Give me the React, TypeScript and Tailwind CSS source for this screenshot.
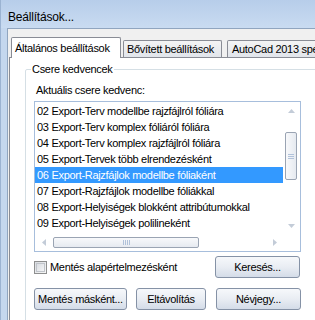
const items = [
  "02 Export-Terv modellbe rajzfájlról fóliára",
  "03 Export-Terv komplex fóliáról fóliára",
  "04 Export-Terv komplex rajzfájlról fóliára",
  "05 Export-Tervek több elrendezésként",
  "06 Export-Rajzfájlok modellbe fóliaként",
  "07 Export-Rajzfájlok modellbe fóliákkal",
  "08 Export-Helyiségek blokként attribútumokkal",
  "09 Export-Helyiségek polilineként",
];

const selected = 4;

function Arrow({ dir }: { dir: "up" | "down" | "left" | "right" }) {
  const pts: Record<string, string> = {
    up: "0,4 3.5,0 7,4",
    down: "0,0 7,0 3.5,4",
    left: "4,0 4,7 0,3.5",
    right: "0,0 4,3.5 0,7",
  };
  const vertical = dir === "up" || dir === "down";
  return (
    <svg
      width={vertical ? 7 : 4}
      height={vertical ? 4 : 7}
      viewBox={vertical ? "0 0 7 4" : "0 0 4 7"}
    >
      <polygon points={pts[dir]} fill="#c3ccd8" />
    </svg>
  );
}

function Button({ label, className }: { label: string; className: string }) {
  return (
    <div
      className={`h-[22px] flex items-center justify-center rounded-[3px] border border-[#8592a6] bg-gradient-to-b from-[#f6f8fb] via-[#e9edf3] to-[#d4dce8] ${className}`}
    >
      {label}
    </div>
  );
}

export default function App() {
  return (
    <div
      className="w-[315px] h-[320px] overflow-hidden bg-[#c4d7ee] border-l border-[#9bb3d2] text-[11px] tracking-[-0.3px] text-black"
      style={{ fontFamily: '"Liberation Sans", Arial, sans-serif' }}
    >
      {/* title bar */}
      <div className="h-[28px] pl-[7px] pt-[10px] bg-gradient-to-b from-[#b7cdea] to-[#c9dbf1]">
        <div className="text-[12px] leading-[14px] tracking-[-0.2px]">Beállítások...</div>
      </div>

      {/* client area */}
      <div className="ml-[6px] w-[360px] h-[292px] border-l border-t border-[#90a5bf] bg-[#f0f0f0] pt-[8px] pl-[1px]">
        {/* tabs */}
        <div className="flex items-end h-[20px] pl-[2px] relative z-10">
          <div className="w-[110px] h-[21px] -mb-[1px] bg-white border border-b-0 border-[#898c95] rounded-t-[2px] pl-[3px] flex items-center leading-[14px]">
            Általános beállítások
          </div>
          <div className="ml-[2px] w-[99px] h-[17px] bg-gradient-to-b from-[#f4f4f4] to-[#e1e5eb] border border-b-0 border-[#898c95] rounded-t-[2px] pl-[3px] flex items-center leading-[14px]">
            Bővített beállítások
          </div>
          <div className="ml-[5px] w-[120px] h-[17px] bg-gradient-to-b from-[#f4f4f4] to-[#e1e5eb] border border-b-0 border-[#898c95] rounded-t-[2px] pl-[4px] flex items-center leading-[14px] whitespace-nowrap">
            AutoCad 2013 specifikus
          </div>
        </div>

        {/* tab page */}
        <div className="w-[340px] h-[300px] border border-[#898c95] bg-white pl-[15px] pt-[4px]">
          <fieldset className="w-[300px] h-[300px] border border-[#d5dfe5] rounded-[2px] pl-[8px]">
            <legend className="-ml-[3px] px-[1px] leading-[14px]">Csere kedvencek</legend>

            <div className="mt-[7px] ml-[2px] leading-[14px]">Aktuális csere kedvenc:</div>

            {/* list box */}
            <div className="mt-[4px] w-[267px] h-[151px] border border-[#a7bedc] bg-white flex flex-col">
              <div className="flex h-[132px]">
                <div className="w-[248px] pt-[1px] overflow-hidden">
                  {items.map((it, i) => (
                    <div
                      key={it}
                      className={`h-[16px] pl-[2px] leading-[16px] whitespace-nowrap ${
                        i === selected ? "bg-[#3399ff] text-white" : ""
                      }`}
                    >
                      {it}
                    </div>
                  ))}
                </div>
                {/* vertical scrollbar */}
                <div className="w-[17px] flex flex-col items-center">
                  <div className="h-[17px] flex items-center justify-center">
                    <Arrow dir="up" />
                  </div>
                  <div className="flex-1 w-full pt-[13px] pl-[2px]">
                    <div className="w-[12px] h-[48px] rounded-[2px] border border-[#9aa4b3] bg-gradient-to-r from-[#f8f9fb] to-[#e6eaf0] flex flex-col items-center justify-center gap-[1px]">
                      <div className="w-[6px] h-px bg-[#b1c2da]" />
                      <div className="w-[6px] h-px bg-[#b1c2da]" />
                      <div className="w-[6px] h-px bg-[#b1c2da]" />
                    </div>
                  </div>
                  <div className="h-[17px] flex items-center justify-center">
                    <Arrow dir="down" />
                  </div>
                </div>
              </div>
              {/* horizontal scrollbar */}
              <div className="flex h-[17px]">
                <div className="w-[248px] flex items-center">
                  <div className="w-[17px] flex items-center justify-center">
                    <Arrow dir="left" />
                  </div>
                  <div className="ml-[1px] w-[146px] h-[11px] rounded-[2px] border border-[#9aa4b3] bg-gradient-to-b from-[#f8f9fb] to-[#e6eaf0] flex items-center justify-center gap-[1px]">
                    <div className="w-px h-[5px] bg-[#b1c2da]" />
                    <div className="w-px h-[5px] bg-[#b1c2da]" />
                    <div className="w-px h-[5px] bg-[#b1c2da]" />
                    <div className="w-px h-[5px] bg-[#b1c2da]" />
                  </div>
                  <div className="flex-1" />
                  <div className="w-[17px] flex items-center justify-center">
                    <Arrow dir="right" />
                  </div>
                </div>
                <div className="w-[17px]" />
              </div>
            </div>

            {/* checkbox + search */}
            <div className="mt-[4px] w-[267px] h-[22px] flex items-center justify-between">
              <div className="flex items-center gap-[3px]">
                <div className="w-[13px] h-[13px] border border-[#8e8f8f] bg-gradient-to-br from-[#d9dce0] to-[#f7f7f7] p-[1px]">
                  <div className="w-full h-full border border-[#c0c4ca] bg-gradient-to-br from-[#dadde2] to-[#f4f5f6]" />
                </div>
                <span className="leading-[14px]">Mentés alapértelmezésként</span>
              </div>
              <Button label="Keresés..." className="w-[85px] mr-[1px]" />
            </div>

            {/* bottom buttons */}
            <div className="mt-[10px] w-[267px] flex">
              <Button label="Mentés másként..." className="w-[93px]" />
              <Button label="Eltávolítás" className="ml-[9px] w-[70px]" />
              <Button label="Névjegy..." className="ml-[10px] w-[85px]" />
            </div>
          </fieldset>
        </div>
      </div>
    </div>
  );
}
